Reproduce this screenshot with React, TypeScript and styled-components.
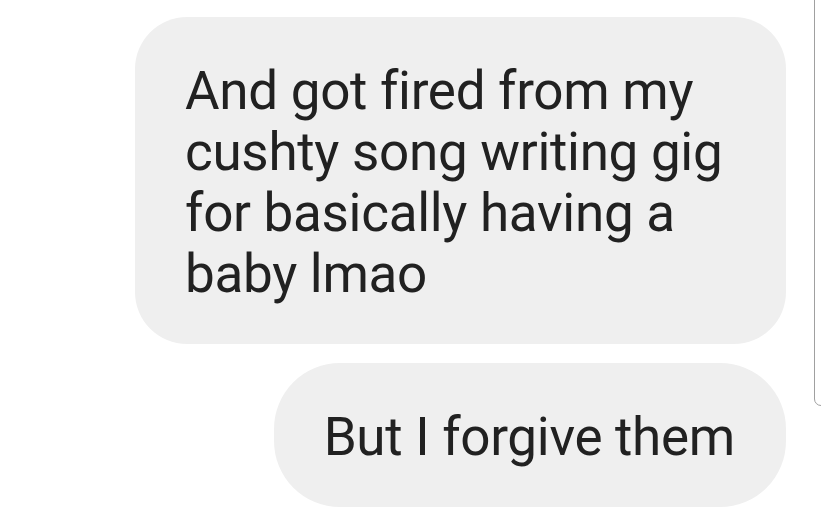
import styled, { createGlobalStyle } from 'styled-components';

const GlobalStyle = createGlobalStyle`
  html, body {
    margin: 0;
    padding: 0;
    background: #ffffff;
  }
  body {
    font-family: Roboto, "Noto Sans", Arial, sans-serif;
    overflow: hidden;
  }
`;

const Screen = styled.div`
  position: relative;
  width: 821px;
  height: 517px;
  overflow: hidden;
  background: #ffffff;
`;

const Thread = styled.div`
  display: flex;
  flex-direction: column;
  align-items: flex-end;
  gap: 19px;
  padding: 17px 35px 0 0;
`;

const Bubble = styled.div<{ $radius: number; $maxWidth: number }>`
  box-sizing: border-box;
  width: fit-content;
  max-width: ${p => p.$maxWidth}px;
  background: #efefef;
  color: #212121;
  border-radius: ${p => p.$radius}px;
  padding: 44px 51px 39px 50px;
  font-size: 53px;
  line-height: 61px;
  letter-spacing: -0.3px;
`;

const ScrollThumb = styled.div`
  position: absolute;
  left: 814px;
  top: -30px;
  width: 14px;
  height: 436px;
  border: 1.5px solid #a0a0a0;
  border-radius: 9px;
  box-sizing: border-box;
`;

const App = () => {
  return (
    <>
      <GlobalStyle />
      <Screen>
        <Thread>
          <Bubble $radius={52} $maxWidth={651}>
            And got fired from my cushty song writing gig for basically having a baby lmao
          </Bubble>
          <Bubble $radius={66} $maxWidth={651}>
            But I forgive them
          </Bubble>
        </Thread>
        <ScrollThumb />
      </Screen>
    </>
  );
};

export default App;
